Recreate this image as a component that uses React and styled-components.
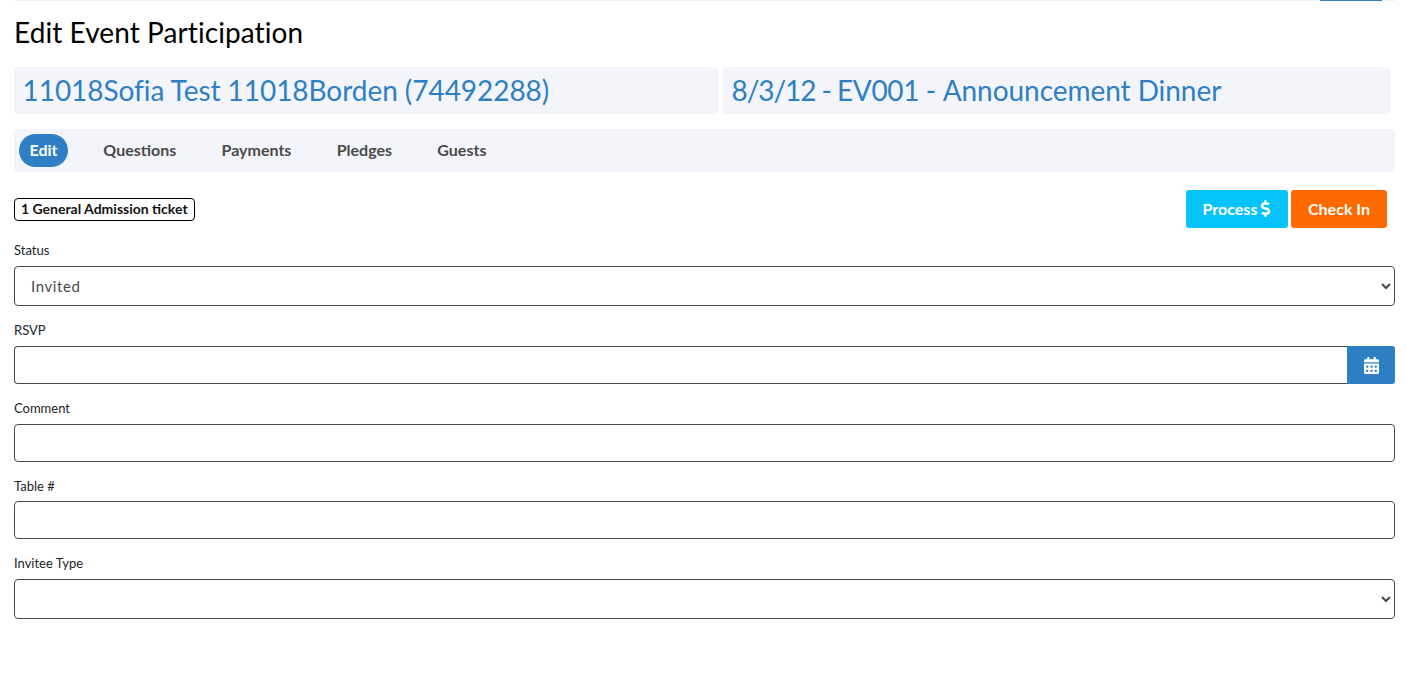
import React from "react";
import styled, { createGlobalStyle } from "styled-components";
import { FaCalendarAlt, FaDollarSign } from "react-icons/fa";

const Global = createGlobalStyle`
  html, body { margin: 0; padding: 0; background: #fff; }
  body { font-family: Lato, "Liberation Sans", sans-serif; color: #212529; }
  * { box-sizing: border-box; }
`;

const Page = styled.div`
  width: 1407px;
  height: 674px;
  padding: 0 12px 0 14px;
  overflow: hidden;
`;

const TopStrip = styled.div`
  height: 1px;
  background: #f0f1f5;
  display: flex;
  justify-content: flex-end;
  padding-right: 13px;
`;

const TopButtonEdge = styled.div`
  width: 62px;
  height: 1px;
  background: #2e7fc4;
`;

const Title = styled.h1`
  margin: 13px 0 0;
  height: 38px;
  font-size: 28px;
  line-height: 37px;
  font-weight: 400;
  font-variant-ligatures: none;
  letter-spacing: 0.08px;
  color: #000;
`;

const HeaderRow = styled.div`
  display: flex;
  gap: 5px;
  margin-top: 15px;
  padding-right: 5px;
`;

const HeaderCard = styled.a`
  flex: 0 0 ${(p) => p.$width}px;
  height: 47px;
  background: #f3f5fa;
  border-radius: 3px;
  padding-left: 8.5px;
  font-size: 28px;
  line-height: 47px;
  color: #2e7fc4;
  letter-spacing: ${(p) => p.$tracking || 0}px;
`;

const Tight = styled.span`
  letter-spacing: ${(p) => p.$tracking}px;
`;

const TabsBar = styled.nav`
  display: flex;
  align-items: center;
  height: 43px;
  margin-top: 15px;
  padding-left: 5px;
  gap: 11.3px;
  background: #f3f5fa;
  border-radius: 3px;
`;

const Tab = styled.a`
  height: 33px;
  padding: 0 ${(p) => (p.$active ? 10.5 : 12)}px;
  margin-right: ${(p) => (p.$active ? 12 : 10)}px;
  border-radius: 17px;
  background: ${(p) => (p.$active ? "#2e7fc4" : "transparent")};
  color: ${(p) => (p.$active ? "#fff" : "#4a4a4a")};
  font-size: 16px;
  font-weight: 700;
  line-height: 31px;
`;

const ActionRow = styled.div`
  display: flex;
  align-items: center;
  justify-content: space-between;
  height: 38px;
  margin-top: 18px;
  padding-right: 8px;
`;

const TicketBadge = styled.span`
  height: 23px;
  padding: 0 6px;
  border: 1px solid #000;
  border-radius: 4px;
  font-size: 14px;
  font-weight: 700;
  line-height: 19px;
  color: #111;
`;

const Actions = styled.div`
  display: flex;
  gap: 3px;
`;

const ActionButton = styled.button`
  display: flex;
  align-items: center;
  justify-content: center;
  width: ${(p) => p.$width}px;
  height: 38px;
  padding: 0 0 2px;
  border: 0;
  border-radius: 3px;
  background: ${(p) => p.$bg};
  color: #fff;
  font-family: inherit;
  font-size: 16px;
  font-weight: 700;
  svg { width: 11px; height: 17px; margin-left: 3px; }
`;

const Form = styled.div`
  display: flex;
  flex-direction: column;
`;

const Field = styled.div`
  display: flex;
  flex-direction: column;
  margin-top: ${(p) => p.$top}px;
`;

const Label = styled.label`
  height: 18px;
  margin-bottom: ${(p) => p.$gap ?? 7}px;
  font-size: 13px;
  line-height: 18px;
  color: #212529;
`;

const Select = styled.select`
  width: 100%;
  height: 40px;
  padding: 0 12px;
  border: 1px solid #4a4a4a;
  border-radius: 4px;
  background: #fff;
  color: #4a4a4a;
  font-family: inherit;
  font-size: 15px;
  letter-spacing: 0.6px;
  outline: none;
`;

const InputGroup = styled.div`
  display: flex;
  height: 38px;
`;

const Input = styled.input`
  flex: ${(p) => (p.$joined ? "1 1 0" : "0 0 38px")};
  min-width: 0;
  height: 38px;
  border: 1px solid #4a4a4a;
  border-right-width: ${(p) => (p.$joined ? 0 : 1)}px;
  border-radius: ${(p) => (p.$joined ? "4px 0 0 4px" : "4px")};
  background: #fff;
  outline: none;
`;

const CalendarButton = styled.button`
  display: flex;
  align-items: center;
  justify-content: center;
  flex: 0 0 48px;
  height: 38px;
  padding: 0;
  border: 0;
  border-radius: 0 3px 3px 0;
  background: #2e7fc4;
  color: #fff;
  svg { width: 15px; height: 17px; }
`;

export default function App() {
  return (
    <Page>
      <Global />
      <TopStrip>
        <TopButtonEdge />
      </TopStrip>
      <Title>Edit Event Participation</Title>
      <HeaderRow>
        <HeaderCard $width={704} $tracking={-0.05}>11018Sofia Test 11018Borden (74492288)</HeaderCard>
        <HeaderCard $width={667}>
          <Tight $tracking={-1.05}>8/3/12 - </Tight>
          <Tight $tracking={-0.37}>EV001 - </Tight>
          <Tight $tracking={-0.05}>Announcement Dinner</Tight>
        </HeaderCard>
      </HeaderRow>
      <TabsBar>
        <Tab $active>Edit</Tab>
        <Tab>Questions</Tab>
        <Tab>Payments</Tab>
        <Tab>Pledges</Tab>
        <Tab>Guests</Tab>
      </TabsBar>
      <ActionRow>
        <TicketBadge>1 General Admission ticket</TicketBadge>
        <Actions>
          <ActionButton $bg="#06c4fb" $width={102}>
            Process <FaDollarSign />
          </ActionButton>
          <ActionButton $bg="#ff6a00" $width={96}>Check In</ActionButton>
        </Actions>
      </ActionRow>
      <Form>
        <Field $top={13}>
          <Label>Status</Label>
          <Select defaultValue="Invited">
            <option>Invited</option>
          </Select>
        </Field>
        <Field $top={15}>
          <Label>RSVP</Label>
          <InputGroup>
            <Input $joined />
            <CalendarButton>
              <FaCalendarAlt />
            </CalendarButton>
          </InputGroup>
        </Field>
        <Field $top={15}>
          <Label>Comment</Label>
          <Input />
        </Field>
        <Field $top={15}>
          <Label $gap={6}>Table #</Label>
          <Input />
        </Field>
        <Field $top={15}>
          <Label>Invitee Type</Label>
          <Select />
        </Field>
      </Form>
    </Page>
  );
}
